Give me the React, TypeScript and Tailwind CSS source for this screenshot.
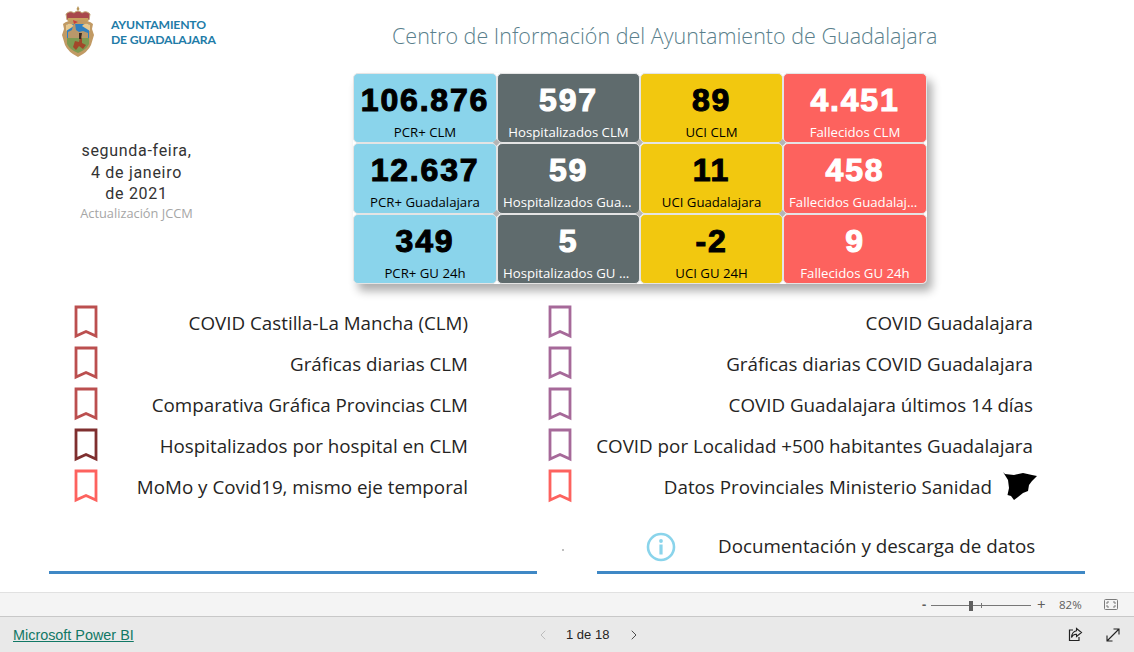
import { ChevronLeft, ChevronRight } from "lucide-react"

const tiles = [
  { value: "106.876", label: "PCR+ CLM", tone: "bg-[#8ad4eb] text-black" },
  { value: "597", label: "Hospitalizados CLM", tone: "bg-[#5f6b6d] text-white" },
  { value: "89", label: "UCI CLM", tone: "bg-[#f2c80f] text-black" },
  { value: "4.451", label: "Fallecidos CLM", tone: "bg-[#fd625e] text-white" },
  { value: "12.637", label: "PCR+ Guadalajara", tone: "bg-[#8ad4eb] text-black" },
  { value: "59", label: "Hospitalizados Guadalajara", tone: "bg-[#5f6b6d] text-white" },
  { value: "11", label: "UCI Guadalajara", tone: "bg-[#f2c80f] text-black" },
  { value: "458", label: "Fallecidos Guadalajara", tone: "bg-[#fd625e] text-white" },
  { value: "349", label: "PCR+ GU 24h", tone: "bg-[#8ad4eb] text-black" },
  { value: "5", label: "Hospitalizados GU 24h", tone: "bg-[#5f6b6d] text-white" },
  { value: "-2", label: "UCI GU 24H", tone: "bg-[#f2c80f] text-black" },
  { value: "9", label: "Fallecidos GU 24h", tone: "bg-[#fd625e] text-white" },
]

const leftLinks = [
  { label: "COVID Castilla-La Mancha (CLM)", color: "#bb4f4f" },
  { label: "Gráficas diarias CLM", color: "#bb4f4f" },
  { label: "Comparativa Gráfica Provincias CLM", color: "#bb4f4f" },
  { label: "Hospitalizados por hospital en CLM", color: "#7f2f2f" },
  { label: "MoMo y Covid19, mismo eje temporal", color: "#fd625e" },
]

const rightLinks = [
  { label: "COVID Guadalajara", color: "#a66999" },
  { label: "Gráficas diarias COVID Guadalajara", color: "#a66999" },
  { label: "COVID Guadalajara últimos 14 días", color: "#a66999" },
  { label: "COVID por Localidad +500 habitantes Guadalajara", color: "#a66999" },
  { label: "Datos Provinciales Ministerio Sanidad", color: "#fd625e", map: true },
]

function Crest() {
  return (
    <svg width="34" height="54" viewBox="0 0 34 54" className="shrink-0">
      <path d="M17 1 L18.5 4 L17 6 L15.5 4 Z" fill="#b9975b" />
      <path d="M6 15 L5 9 Q9 5 13 8 Q17 4 21 8 Q25 5 29 9 L28 15 Z" fill="#a8484c" stroke="#c4a877" strokeWidth="1" />
      <path d="M7 13 H27 V16 H7 Z" fill="#c9a25f" />
      <path d="M2 19 Q6 15 17 15 Q28 15 32 19 L31 24 L33 30 L30 40 Q27 47 17 52 Q7 47 4 40 L1 30 L3 24 Z" fill="#c19a64" />
      <path d="M6 19 H28 V33 H6 Z" fill="#2f7fc1" />
      <path d="M5 20 Q10 17 13 21 L5 26 Z" fill="#e8c98f" />
      <path d="M29 20 Q24 17 21 21 L29 26 Z" fill="#e8c98f" />
      <path d="M7 33 V27 L11 25 L12 20 L14 18 L15 25 L18 27 L22 26 L27 28 V33 Z" fill="#b9986a" />
      <path d="M12 15 L17 17 L13 19 Z" fill="#c9403c" />
      <path d="M6 33 H28 L28 39 Q25 45 17 48 Q9 45 6 39 Z" fill="#7d9a52" />
      <path d="M12 42 L14 36 L18 37 L19 32 L21 33 L21 38 L25 40 L22 44 L18 41 L15 45 Z" fill="#a2472a" />
      <path d="M18 28 L21 28 L20 34 L18 34 Z" fill="#3b2a20" />
    </svg>
  )
}

function Tile({ tile, index }: { tile: (typeof tiles)[number]; index: number }) {
  const showDot = index < 8 && index % 4 !== 3

  return (
    <div className={`relative flex min-w-0 flex-col items-center rounded-[5px] border border-[#e4e4e4] px-[5px] ${tile.tone}`}>
      <div className="mt-[6px] font-['Liberation_Sans',sans-serif] text-[32px] leading-[40px] font-bold tracking-[1.8px] [-webkit-text-stroke:1.1px_currentColor]">
        {tile.value}
      </div>
      <div className="mt-[3px] w-full truncate text-center font-['Open_Sans',sans-serif] text-[13.2px] leading-[18px]">
        {tile.label}
      </div>
      {showDot && <span className="absolute -right-[3px] -bottom-[3px] z-10 size-[5px] rotate-45 bg-[#b4b4b4]" />}
    </div>
  )
}

function Bookmark({ color }: { color: string }) {
  return (
    <svg width="24" height="34" viewBox="0 0 24 34" className="mb-[4px] shrink-0">
      <path d="M2 2 H22 V31 L12 26.5 L2 31 Z" fill="none" stroke={color} strokeWidth="2.8" />
    </svg>
  )
}

function LinkRow({ link }: { link: { label: string; color: string; map?: boolean } }) {
  return (
    <div className="flex h-[41px] items-center justify-between">
      <Bookmark color={link.color} />
      <div className="flex items-center">
        <span className="font-['Open_Sans',sans-serif] text-[18.8px] whitespace-nowrap text-[#252423]">{link.label}</span>
        {link.map && (
          <svg width="35" height="30" viewBox="0 0 35 30" className="-mr-[5px] mb-[2px] ml-[11px]">
            <path d="M0 0 L2 2 L11 3 L20 1 L29 3 L34 4 L29 9 L26 13 L25 19 L20 21 L15 25 L11 28 L8 24 L4.5 23 L6 16 L5 8 Z" fill="#000" />
          </svg>
        )}
      </div>
    </div>
  )
}

export default function App() {
  return (
    <div className="flex h-[652px] w-[1134px] flex-col overflow-hidden bg-white font-['Open_Sans',sans-serif]">
      <main className="h-[592px] shrink-0">
        <div className="flex h-[291px]">
          <div className="w-[353px] shrink-0">
            <div className="ml-[61px] flex items-center gap-[16px] pt-[5px]">
              <Crest />
              <div className="font-['Lato',sans-serif] text-[12.2px] leading-[15px] font-bold tracking-[-0.2px] text-[#1f7ca8]">
                <div>AYUNTAMIENTO</div>
                <div>DE GUADALAJARA</div>
              </div>
            </div>
            <div className="mt-[81px] ml-[60px] w-[153px] text-center">
              <div className="font-['Roboto',sans-serif] text-[16px] leading-[21.5px] tracking-[0.7px] text-[#333]">
                <div>segunda-feira,</div>
                <div>4 de janeiro</div>
                <div>de 2021</div>
              </div>
              <div className="text-[12.8px] leading-[17px] text-[#a6a6a6]">Actualización JCCM</div>
            </div>
          </div>
          <div className="min-w-0 flex-1">
            <h1 className="ml-[39px] h-[73px] pt-[20px] text-[21.5px] leading-[32px] font-light text-[#5a7f8c]">
              Centro de Información del Ayuntamiento de Guadalajara
            </h1>
            <div className="grid w-[574px] grid-cols-[144px_143px_143px_144px] grid-rows-[70px_71px_70px] rounded-[5px] shadow-[5px_7px_10px_rgba(0,0,0,0.32)]">
              {tiles.map((tile, index) => (
                <Tile key={tile.label} tile={tile} index={index} />
              ))}
            </div>
          </div>
        </div>

        <div className="mt-[12px] ml-[74px] grid w-[959px] grid-cols-[394px_485px] gap-x-[80px]">
          <div>
            {leftLinks.map((link) => (
              <LinkRow key={link.label} link={link} />
            ))}
          </div>
          <div>
            {rightLinks.map((link) => (
              <LinkRow key={link.label} link={link} />
            ))}
          </div>
        </div>

        <div className="mt-[11px] ml-[49px] grid w-[1036px] grid-cols-[488px_488px] gap-x-[60px]">
          <div className="relative h-[55px] border-b-[3px] border-[#3f88c5]">
            <span className="absolute top-[30px] -right-[27px] size-[2px] rounded-full bg-[#aaa]" />
          </div>
          <div className="flex h-[55px] items-center border-b-[3px] border-[#3f88c5] pt-[3px]">
            <svg width="30" height="30" viewBox="0 0 30 30" className="ml-[49px]">
              <circle cx="15" cy="15" r="13" fill="none" stroke="#8ad4eb" strokeWidth="2.6" />
              <circle cx="15" cy="9" r="1.9" fill="#8ad4eb" />
              <rect x="13.4" y="12.5" width="3.2" height="10" fill="#8ad4eb" />
            </svg>
            <span className="ml-[42px] text-[18.8px] whitespace-nowrap text-[#252423]">Documentación y descarga de datos</span>
          </div>
        </div>
      </main>

      <div className="flex h-[24px] shrink-0 items-center border-t border-[#e1e1e1] bg-[#f4f4f4] pl-[922px] text-[#605e5c]">
        <span className="w-[9px] text-[13px] leading-none font-bold">-</span>
        <div className="relative mt-[1px] h-px w-[100px] bg-[#777]">
          <span className="absolute -top-[4px] left-[38px] h-[10px] w-[4px] bg-[#5f5f5f]" />
          <span className="absolute -top-[2px] left-[50px] h-[5px] w-px bg-[#777]" />
        </div>
        <span className="ml-[6px] w-[10px] text-[15px] leading-none">+</span>
        <span className="ml-[12px] w-[30px] text-[11.5px]">82%</span>
        <svg width="14" height="11" viewBox="0 0 14 11" className="ml-[15px]">
          <rect x="0.5" y="0.5" width="13" height="10" rx="1" fill="none" stroke="#7a7a7a" />
          <path d="M3 5 V3 H5 M9 3 H11 V5 M11 6 V8 H9 M5 8 H3 V6" fill="none" stroke="#7a7a7a" />
        </svg>
      </div>

      <footer className="flex h-[37px] shrink-0 items-center border-t border-[#c8c8c8] bg-[#e9e9e9]">
        <a className="mt-[1px] ml-[13px] w-[522px] font-['Liberation_Sans',sans-serif] text-[14.4px] text-[#117865] underline">Microsoft Power BI</a>
        <ChevronLeft className="size-[16px] text-[#b5b5b5]" strokeWidth={1.3} />
        <span className="ml-[15px] w-[44px] font-['Liberation_Sans',sans-serif] text-[13px] whitespace-nowrap text-[#252423]">1 de 18</span>
        <ChevronRight className="ml-[16px] size-[16px] text-[#333]" strokeWidth={1.3} />
        <svg width="16" height="16" viewBox="0 0 16 16" className="ml-[425px]">
          <path d="M6 3 H2.5 V13.5 H12 V10" fill="none" stroke="#222" strokeWidth="1.2" />
          <path d="M9.5 1.5 L14.5 5.5 L9.5 9.5 V7.3 Q6 7 4.5 10.5 Q5 4.5 9.5 3.8 Z" fill="none" stroke="#222" strokeWidth="1.1" />
        </svg>
        <svg width="14" height="14" viewBox="0 0 14 14" className="ml-[23px]">
          <path d="M1 13 L13 1 M7.5 1 H13 V6.5 M1 7.5 V13 H6.5" fill="none" stroke="#222" strokeWidth="1.1" />
        </svg>
      </footer>
    </div>
  )
}
